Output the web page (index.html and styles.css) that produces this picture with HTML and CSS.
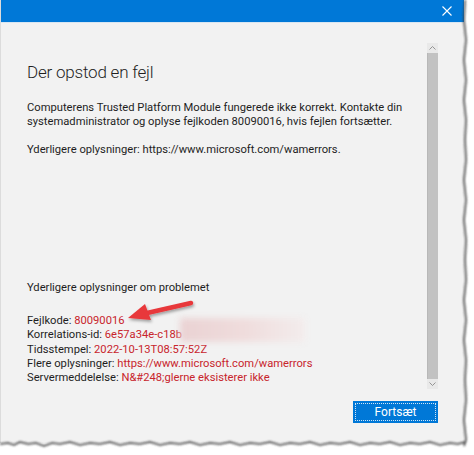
FILE: index.html
```html
<!DOCTYPE html>
<html lang="da">
<head>
<meta charset="utf-8">
<title>Der opstod en fejl</title>
<link rel="stylesheet" href="styles.css">
</head>
<body>
<div class="window">
  <div class="titlebar">
    <svg class="close" width="10" height="10" viewBox="0 0 10 10"><path d="M0.5 0.5L9.5 9.5M9.5 0.5L0.5 9.5" stroke="#fff" stroke-width="1.1" fill="none"/></svg>
  </div>
  <div class="main">
    <div class="content">
      <h1 class="heading">Der opstod en fejl</h1>
      <p class="para">Computerens Trusted Platform Module fungerede ikke korrekt. Kontakte din systemadministrator og oplyse fejlkoden 80090016, hvis fejlen fortsætter.</p>
      <p class="para">Yderligere oplysninger: https://www.microsoft.com/wamerrors.</p>
      <p class="para details-title">Yderligere oplysninger om problemet</p>
      <div class="details">
        <div>Fejlkode: <span class="red">80090016</span></div>
        <div>Korrelations-id: <span class="red">6e57a34e-c18b</span></div>
        <div>Tidsstempel: <span class="red">2022-10-13T08:57:52Z</span></div>
        <div>Flere oplysninger: <span class="red">https://www.microsoft.com/wamerrors</span></div>
        <div>Servermeddelelse: <span class="red">N&amp;#248;glerne eksisterer ikke</span></div>
      </div>
    </div>
    <div class="scrollbar">
      <div class="sb-btn"><svg width="7" height="4" viewBox="0 0 7 4"><path d="M0.5 3.5L3.5 0.5L6.5 3.5" stroke="#8a8a8a" fill="none" stroke-width="0.9"/></svg></div>
      <div class="sb-thumb"></div>
      <div class="sb-btn"><svg width="7" height="4" viewBox="0 0 7 4"><path d="M0.5 0.5L3.5 3.5L6.5 0.5" stroke="#8a8a8a" fill="none" stroke-width="0.9"/></svg></div>
    </div>
  </div>
  <div class="footer">
    <button class="btn"><span class="focus">Fortsæt</span></button>
  </div>
</div>
<div class="blur"></div>
<svg class="arrow" width="80" height="40" viewBox="0 0 80 40">
  <defs>
    <filter id="sh" x="-20%" y="-40%" width="140%" height="180%"><feDropShadow dx="1" dy="2" stdDeviation="1.5" flood-color="#000" flood-opacity="0.35"/></filter>
  </defs>
  <g filter="url(#sh)">
    <path d="M66 11 L22 21" stroke="#e8373b" stroke-width="4.5" stroke-linecap="round" fill="none"/>
    <path d="M3 26 L20 12 L26 28 Z" fill="#e8373b"/>
  </g>
</svg>
<svg class="torn" width="474" height="455" viewBox="0 0 474 455">
  <defs>
    <filter id="tb"><feGaussianBlur stdDeviation="0.8"/></filter>
  </defs>
  <g filter="url(#tb)" stroke="#3a3a3a" fill="none" stroke-width="1.6">
    <path d="M465 0 L464 20 L466 40 L464 60 L466 80 L464 100 L466 120 L465 140 L466 160 L464 180 L466 200 L464 220 L466 240 L465 260 L466 280 L464 300 L466 320 L464 340 L466 360 L465 380 L466 400 L464 420 L466 440 L464 446"/>
    <path d="M0 444 L8 443 L14 445 L20 442 L28 444 L36 443 L44 446 L52 443 L60 444 L70 442 L80 445 L90 443 L100 444 L110 442 L120 445 L130 443 L140 444 L150 442 L160 445 L170 443 L180 444 L190 442 L200 445 L210 443 L220 444 L230 442 L240 445 L250 443 L260 444 L270 442 L280 445 L290 443 L300 444 L310 442 L320 445 L330 443 L340 444 L350 442 L360 445 L370 443 L380 444 L390 442 L400 445 L410 443 L420 444 L430 442 L440 445 L450 443 L458 444 L465 442"/>
  </g>
</svg>
</body>
</html>
```

FILE: styles.css
```css
html, body {
  margin: 0;
  padding: 0;
  background: #ffffff;
}
body {
  width: 474px;
  height: 455px;
  position: relative;
  overflow: hidden;
  font-family: Roboto, "Noto Sans", sans-serif;
  color: #1e1e1e;
}
.window {
  width: 464px;
  height: 443px;
  background: #f2f2f2;
  display: flex;
  flex-direction: column;
  box-sizing: border-box;
  border-left: 1px solid #dcdcdc;
}
.titlebar {
  height: 22px;
  background: #0078d7;
  display: flex;
  align-items: center;
  justify-content: flex-end;
  padding-right: 12px;
  border-bottom: 1px solid #d8e6f2;
}
.main {
  display: flex;
  height: 369px;
}
.content {
  flex: 1;
  padding: 36px 0 0 26px;
  font-size: 11.2px;
  line-height: 14.3px;
}
.heading {
  margin: 0 0 16px 0;
  font-weight: 300;
  font-size: 17px;
  line-height: 26px;
  letter-spacing: -0.2px;
}
.para {
  margin: 0 0 13px 0;
  width: 380px;
}
.details-title {
  margin-top: 124px;
  margin-bottom: 19px;
}
.red {
  color: #c8242c;
}
.scrollbar {
  width: 11px;
  margin: 20px 26px 0 0;
  height: 346px;
  display: flex;
  flex-direction: column;
}
.sb-btn {
  height: 10px;
  background: #e9e9e9;
  display: flex;
  align-items: center;
  justify-content: center;
}
.sb-thumb {
  flex: 1;
  background: #c2c2c2;
  border-left: 1px solid #b8b8b8;
}
.footer {
  display: flex;
  justify-content: flex-end;
  padding: 9px 26px 0 0;
}
.btn {
  width: 85px;
  height: 22px;
  padding: 2px;
  border: none;
  background: #0078d7;
  color: #ffffff;
  font-family: Roboto, "Noto Sans", sans-serif;
  font-size: 12px;
  display: flex;
}
.focus {
  flex: 1;
  border: 1px dotted #cfe4f6;
  display: flex;
  align-items: center;
  justify-content: center;
}
.blur {
  position: absolute;
  left: 180px;
  top: 318px;
  width: 125px;
  height: 24px;
  background: linear-gradient(90deg, #ead2d3 0%, #efdcdc 50%, #f3ecec 100%);
  filter: blur(3px);
}
.arrow {
  position: absolute;
  left: 125px;
  top: 292px;
}
.torn {
  position: absolute;
  left: 0;
  top: 0;
  pointer-events: none;
}
```
